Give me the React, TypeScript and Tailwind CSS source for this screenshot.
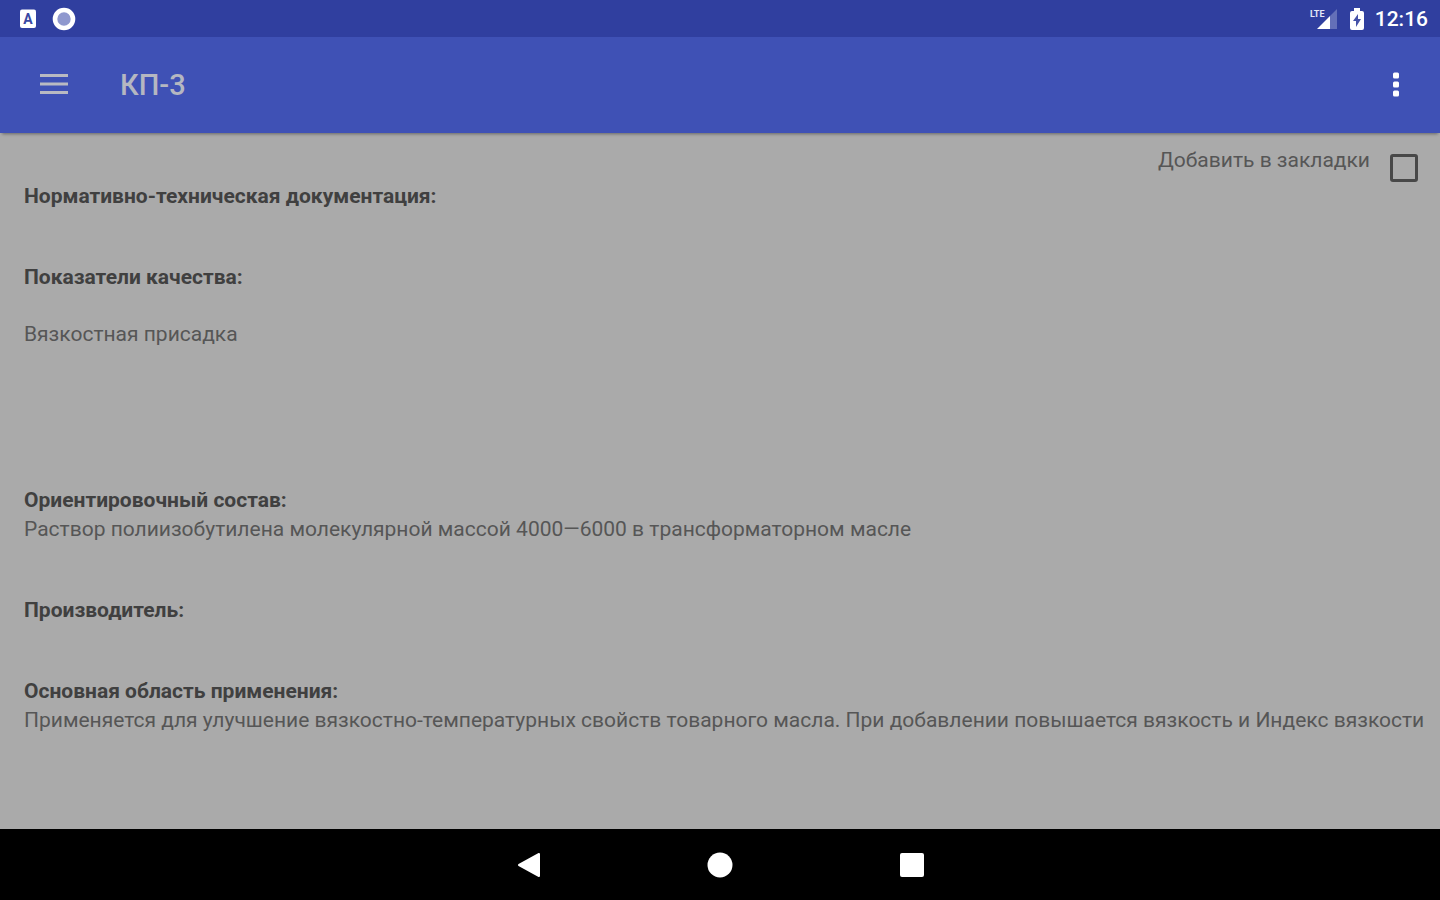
import type { ReactNode } from 'react';

const StatusBar = () => (
  <div className="flex h-[37px] items-center justify-between bg-[#303f9f] pr-3 pl-5 text-white">
    <div className="flex items-center gap-4">
      <svg className="h-6 w-4" viewBox="0 0 16 24" aria-hidden="true">
        <rect x="0" y="2.500" width="16" height="18.500" rx="2" fill="#fff" />
        <text x="8" y="17" textAnchor="middle" fontSize="14" fontWeight="700" fill="#3a48a3">A</text>
      </svg>
      <svg className="h-6 w-6" viewBox="0 0 24 24" aria-hidden="true">
        <circle cx="12" cy="12" r="9" fill="#8f98ce" stroke="#fff" strokeWidth="4.600" />
      </svg>
    </div>
    <div className="flex items-center">
      <svg className="mr-3 h-6 w-7" viewBox="0 0 28 24" aria-hidden="true">
        <path d="M28 2v20h-7V9z" fill="#6470b8" />
        <path d="M21 9v13H8z" fill="#fff" />
        <text x="1" y="10" fontSize="9" fontWeight="700" fill="#e4e7f6">LTE</text>
      </svg>
      <svg className="mr-2.5 h-6 w-4" viewBox="0 0 16 24" aria-hidden="true">
        <path d="M5 1h6v3h2q2 0 2 2v15q0 2-2 2H3q-2 0-2-2V6q0-2 2-2h2z" fill="#fff" />
        <path d="M9 7v5h3l-5 8v-6H4z" fill="#4552a8" />
      </svg>
      <span className="text-[21px] leading-6 font-medium">12:16</span>
    </div>
  </div>
);

const Toolbar = () => (
  <header className="relative flex h-24 items-center bg-[#3f51b5] px-6 shadow-[0_3px_3px_-2px_rgba(0,0,0,0.4)]">
    <button type="button" aria-label="Меню" className="flex h-12 w-[60px] items-center justify-center">
      <svg className="h-6 w-7" viewBox="0 0 28 24" aria-hidden="true">
        <path d="M0 2.500h28M0 11h28M0 19.500h28" stroke="#b9bac2" strokeWidth="3" />
      </svg>
    </button>
    <h1 className="ml-9 text-[29px] leading-9 font-medium text-[#b5b7c1]">КП-3</h1>
    <button type="button" aria-label="Ещё" className="ml-auto flex h-12 w-10 items-center justify-center">
      <svg className="h-7 w-2" viewBox="0 0 8 28" aria-hidden="true">
        <rect x="1" y="1.500" width="6" height="6" rx="1.500" fill="#fff" />
        <rect x="1" y="10.500" width="6" height="6" rx="1.500" fill="#fff" />
        <rect x="1" y="19.500" width="6" height="6" rx="1.500" fill="#fff" />
      </svg>
    </button>
  </header>
);

const Section = ({ title, children }: { title: string; children?: ReactNode }) => (
  <section>
    <h2 className="font-bold text-[#404040]">{title}</h2>
    {children}
  </section>
);

const NavBar = () => (
  <nav className="flex h-[71px] items-center justify-center gap-36 bg-black">
    <button type="button" aria-label="Назад" className="flex h-12 w-12 items-center justify-center">
      <svg className="h-7 w-7" viewBox="0 0 28 28" aria-hidden="true">
        <path d="M25 3v22L5 14z" fill="#fff" stroke="#fff" strokeWidth="2" strokeLinejoin="round" />
      </svg>
    </button>
    <button type="button" aria-label="Домой" className="flex h-12 w-12 items-center justify-center">
      <svg className="h-7 w-7" viewBox="0 0 28 28" aria-hidden="true">
        <circle cx="14" cy="14" r="12.500" fill="#fff" />
      </svg>
    </button>
    <button type="button" aria-label="Недавние" className="flex h-12 w-12 items-center justify-center">
      <svg className="h-7 w-7" viewBox="0 0 28 28" aria-hidden="true">
        <rect x="2" y="2" width="24" height="24" rx="2" fill="#fff" />
      </svg>
    </button>
  </nav>
);

const App = () => {
  return (
    <div className="flex min-h-screen flex-col bg-[#aaaaaa] font-['Roboto',sans-serif]">
      <StatusBar />
      <Toolbar />
      <main className="flex-1 px-6 text-[21px] leading-[29px] text-[#565656]">
        <div className="-mr-0.5 flex h-[49px] justify-end pt-[13px]">
          <label htmlFor="bookmark">Добавить в закладки</label>
          <input
            id="bookmark"
            type="checkbox"
            className="mt-2 ml-5 h-7 w-7 appearance-none rounded-[3px] border-3 border-[#484848] checked:bg-[#484848]"
          />
        </div>

        <div className="flex flex-col gap-[52px]">
          <Section title="Нормативно-техническая документация:" />
          <Section title="Показатели качества:">
            <p className="mt-7 mb-[85px]">Вязкостная присадка</p>
          </Section>
          <Section title="Ориентировочный состав:">
            <p>Раствор полиизобутилена молекулярной массой 4000—6000 в трансформаторном масле</p>
          </Section>
          <Section title="Производитель:" />
          <Section title="Основная область применения:">
            <p className="-mr-6">
              Применяется для улучшение вязкостно-температурных свойств товарного масла. При добавлении повышается вязкость и Индекс вязкости
            </p>
          </Section>
        </div>
      </main>
      <NavBar />
    </div>
  );
};

export default App;
